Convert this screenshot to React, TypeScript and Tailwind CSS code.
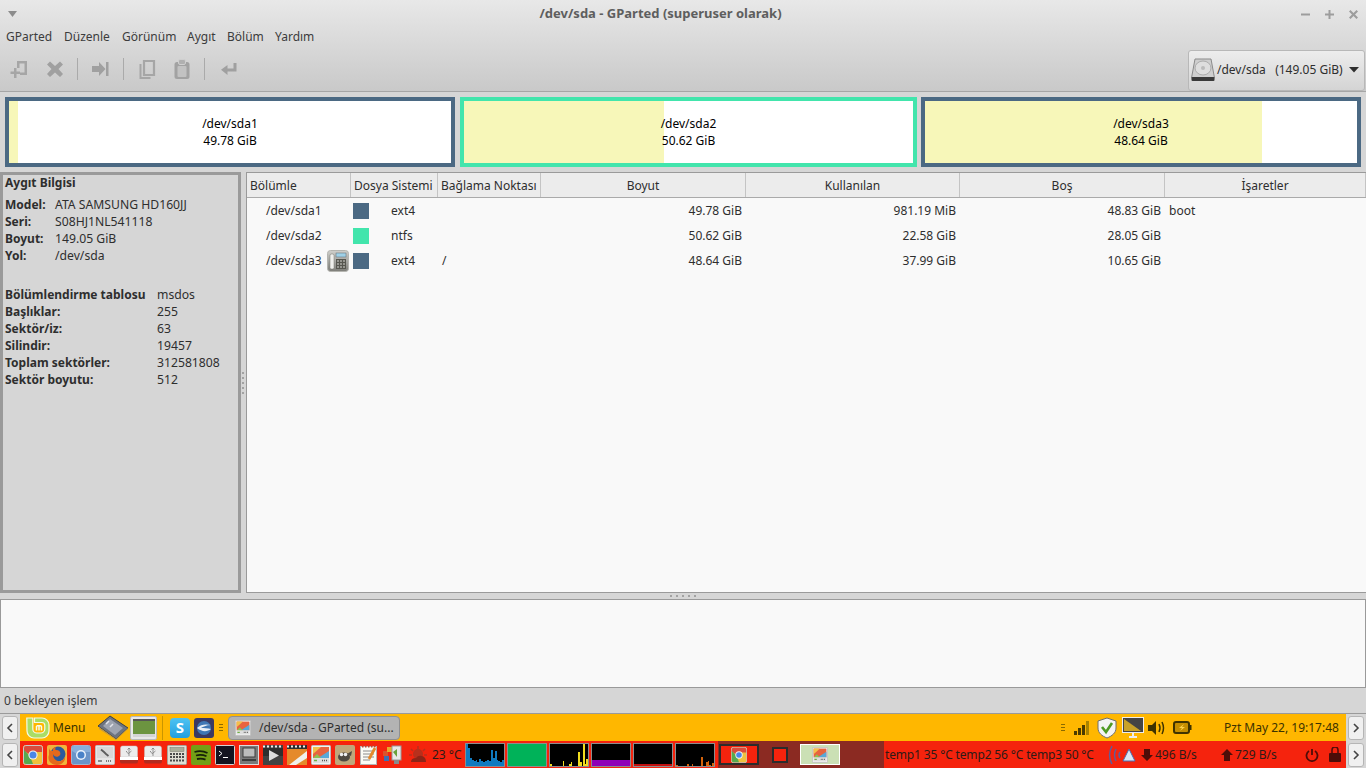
import type { ReactNode } from "react";

const deviceRows = [
  ["Model:", "ATA SAMSUNG HD160JJ"],
  ["Seri:", "S08HJ1NL541118"],
  ["Boyut:", "149.05 GiB"],
  ["Yol:", "/dev/sda"],
];

const tableRows = [
  ["Başlıklar:", "255"],
  ["Sektör/iz:", "63"],
  ["Silindir:", "19457"],
  ["Toplam sektörler:", "312581808"],
  ["Sektör boyutu:", "512"],
];

const menus = [
  ["GParted", "w-[58px]"],
  ["Düzenle", "w-[58px]"],
  ["Görünüm", "w-[65px]"],
  ["Aygıt", "w-[40px]"],
  ["Bölüm", "w-[48px]"],
  ["Yardım", "w-[48px]"],
];

const columns = [
  ["Bölümle", "w-[104px] justify-start pl-[3px]"],
  ["Dosya Sistemi", "w-[87px] justify-start pl-[3px]"],
  ["Bağlama Noktası", "w-[103px] justify-start pl-[3px]"],
  ["Boyut", "w-[205px] justify-center"],
  ["Kullanılan", "w-[214px] justify-center"],
  ["Boş", "w-[205px] justify-center"],
  ["İşaretler", "w-[201px] justify-center"],
];

const partitions = [
  { name: "/dev/sda1", color: "bg-[#4b6983]", fs: "ext4", mount: "", size: "49.78 GiB", used: "981.19 MiB", free: "48.83 GiB", flags: "boot", key: false },
  { name: "/dev/sda2", color: "bg-[#42e5ac]", fs: "ntfs", mount: "", size: "50.62 GiB", used: "22.58 GiB", free: "28.05 GiB", flags: "", key: false },
  { name: "/dev/sda3", color: "bg-[#4b6983]", fs: "ext4", mount: "/", size: "48.64 GiB", used: "37.99 GiB", free: "10.65 GiB", flags: "", key: true },
];

function Ico({ children, size = 20, className = "" }: { children: ReactNode; size?: number; className?: string }) {
  return (
    <svg width={size} height={size} viewBox="0 0 20 20" className={`shrink-0 ${className}`}>
      {children}
    </svg>
  );
}

function ToolSep() {
  return <div className="h-[22px] w-px bg-[#aaaaaa]" />;
}

function Toolbar() {
  return (
    <div className="flex h-[40px] items-center pl-[9px] pt-[8px]">
      <div className="mr-[16px]">
        <Ico>
          <path d="M8 2h10v14h-7v-2.500h4.500v-9h-5V9H8z" fill="#a6a6a6" />
          <path d="M5 9h2.500v3.500H11V15H7.500v4H5v-4H1.500v-2.500H5z" fill="#a6a6a6" />
        </Ico>
      </div>
      <div className="mr-[12px]">
        <Ico>
          <path d="M5 2.500l5 4.500 5-4.500 3 3L13.500 10l4.500 5-3 3-5-4.500L5 18l-3-3 4.500-5L2 5.500z" fill="#a0a0a0" />
        </Ico>
      </div>
      <ToolSep />
      <div className="ml-[13px] mr-[12px]">
        <Ico>
          <path d="M1 7h7V3l6.500 7L8 17v-4H1z" fill="#a0a0a0" />
          <rect x="15" y="3" width="2.500" height="14" fill="#a0a0a0" />
        </Ico>
      </div>
      <ToolSep />
      <div className="ml-[13px] mr-[15px]">
        <Ico>
          <path d="M7 2h10v14H7z" fill="none" stroke="#a6a6a6" strokeWidth="2.200" />
          <path d="M3.500 5v14h10" fill="none" stroke="#a6a6a6" strokeWidth="2" />
        </Ico>
      </div>
      <div className="mr-[12px]">
        <Ico>
          <rect x="2.500" y="3" width="15" height="17" rx="2.500" fill="#a2a2a2" />
          <rect x="6.500" y="0.500" width="7" height="5" rx="1.500" fill="#b0b0b0" stroke="#cfcfcf" />
          <rect x="5.500" y="7" width="9" height="11" rx="1" fill="#c2c2c2" />
        </Ico>
      </div>
      <ToolSep />
      <div className="ml-[14px]">
        <Ico>
          <path d="M14.500 4H17.500v8.500H8.500V16L2 10.800 8.500 6v3.500h6z" fill="#a0a0a0" />
        </Ico>
      </div>
    </div>
  );
}

function DiskIcon() {
  return (
    <svg width="24" height="24" viewBox="0 0 24 24" className="shrink-0">
      <path d="M4 1h16l3.500 19H.5z" fill="#cfcfcf" stroke="#8a8a8a" />
      <ellipse cx="12" cy="10" rx="8" ry="7" fill="#dedede" stroke="#ababab" />
      <circle cx="12" cy="10" r="2" fill="#bbbbbb" />
      <rect x="0.500" y="19" width="23" height="4" rx="1" fill="#3a3a3a" />
    </svg>
  );
}

function PartitionBox({ name, size, border, width, usedWidth }: { name: string; size: string; border: string; width: string; usedWidth: string }) {
  return (
    <div className={`relative h-[70px] border-[4px] bg-white ${border} ${width}`}>
      <div className={`absolute inset-y-0 left-0 bg-[#f7f7b9] ${usedWidth}`} />
      <div className="relative flex h-full flex-col items-center justify-center leading-[17px] text-black">
        <span>{name}</span>
        <span>{size}</span>
      </div>
    </div>
  );
}

function InfoPanel() {
  return (
    <div className="h-[421px] w-[241px] shrink-0 border-[3px] border-[#9a9a9a] bg-[#d6d6d6] pl-[2px] leading-[17px] text-[#2e2e2e]">
      <div className="mt-[-1px] font-bold">Aygıt Bilgisi</div>
      <div className="mt-[5px]">
        {deviceRows.map(([label, value]) => (
          <div key={label} className="flex">
            <span className="w-[50px] font-bold">{label}</span>
            <span className="text-[12.200px]">{value}</span>
          </div>
        ))}
      </div>
      <div className="mt-[22px]">
        <div className="flex">
          <span className="w-[152px] font-bold">Bölümlendirme tablosu</span>
          <span className="text-[12.200px]">msdos</span>
        </div>
        {tableRows.map(([label, value]) => (
          <div key={label} className="flex">
            <span className="w-[152px] font-bold">{label}</span>
            <span className="text-[12.200px]">{value}</span>
          </div>
        ))}
      </div>
    </div>
  );
}

function PhoneIcon() {
  return (
    <svg width="22" height="22" viewBox="0 0 22 22" className="absolute left-[80px] top-[2px]">
      <defs>
        <linearGradient id="ph" x1="0" y1="0" x2="0" y2="1">
          <stop offset="0" stopColor="#d0d0cc" />
          <stop offset="1" stopColor="#7d7d78" />
        </linearGradient>
      </defs>
      <rect x="0.500" y="0.500" width="21" height="21" rx="3" fill="url(#ph)" stroke="#b5b5b0" />
      <rect x="3" y="4" width="4" height="15" rx="1.500" fill="#efefec" stroke="#77776f" strokeWidth="0.500" />
      <rect x="9" y="3" width="10" height="4" fill="#9fd0e6" stroke="#5e6a70" strokeWidth="0.500" />
      <rect x="9" y="9" width="10" height="10" fill="#56564f" />
      <path d="M10 11h8M10 14h8M10 17h8" stroke="#d4d4d0" strokeWidth="1.200" strokeDasharray="2 1" />
    </svg>
  );
}

function PartitionTable() {
  return (
    <div className="h-[421px] flex-1 border border-[#9a9a9a] bg-[#f9f9f9] text-[#2e2e2e]">
      <div className="flex h-[25px] border-b border-[#aaaaaa] bg-[#ececec]">
        {columns.map(([label, cls]) => (
          <div key={label} className={`flex items-center whitespace-nowrap border-r border-[#c4c4c4] pt-[1px] ${cls}`}>
            {label}
          </div>
        ))}
      </div>
      {partitions.map((p) => (
        <div key={p.name} className="flex h-[25px] items-center">
          <div className="relative h-full w-[104px] pl-[19px] leading-[25px]">
            {p.name}
            {p.key && <PhoneIcon />}
          </div>
          <div className="flex w-[87px] items-center pl-[2px]">
            <div className={`h-[16px] w-[16px] ${p.color}`} />
            <span className="ml-[22px]">{p.fs}</span>
          </div>
          <div className="w-[103px] pl-[4px]">{p.mount}</div>
          <div className="w-[205px] pr-[4px] text-right">{p.size}</div>
          <div className="w-[214px] pr-[4px] text-right">{p.used}</div>
          <div className="w-[205px] pr-[4px] text-right">{p.free}</div>
          <div className="pl-[4px]">{p.flags}</div>
        </div>
      ))}
    </div>
  );
}

function Grip({ vertical }: { vertical?: boolean }) {
  return (
    <div className={`flex ${vertical ? "flex-col gap-[3px]" : "gap-[4px]"}`}>
      {[0, 1, 2, 3, 4].map((i) => (
        <div key={i} className="h-[2px] w-[2px] bg-[#a2a2a2]" />
      ))}
    </div>
  );
}

function ScrollBtn({ dir }: { dir: "l" | "r" }) {
  return (
    <div className="flex h-full w-[20px] shrink-0 items-center justify-center bg-[#d6d6d6]">
      <div className="flex h-[24px] w-[16px] items-center justify-center rounded-[3px] border border-[#b5b5b5] bg-[#f0f0f0]">
        <svg width="8" height="10" viewBox="0 0 8 10">
          <path d={dir === "l" ? "M6 1L2 5l4 4" : "M2 1l4 4-4 4"} fill="none" stroke="#444444" strokeWidth="1.600" />
        </svg>
      </div>
    </div>
  );
}

function MintLogo() {
  return (
    <svg width="24" height="22" viewBox="0 0 24 22" className="shrink-0">
      <path d="M.8 1h6v11a4 4 0 004 4h4a4 4 0 004-4V8.500a3 3 0 00-3-3H8.500V1H16a7 7 0 017 7v6a7 7 0 01-7 7H8a7 7 0 01-7-7z" fill="#a9dd66" stroke="#f4fbe6" strokeWidth="1.200" />
      <path d="M10.500 13.500V9M13 13.500V9.500M15.500 13.500V9.500M10.500 8.800h4a1 1 0 011 1" fill="none" stroke="#f7fcec" strokeWidth="1.500" />
    </svg>
  );
}

function ChromeIcon({ size = 20 }: { size?: number }) {
  return (
    <Ico size={size}>
      <rect x="0.500" y="0.500" width="19" height="19" rx="2" fill="#efc13c" stroke="#c9c9c9" />
      <path d="M1 3a2 2 0 012-2h14a2 2 0 012 2v4h-9a4 4 0 00-4 2L1 6z" fill="#d94b3d" />
      <path d="M1 5l6 6 3 8H3a2 2 0 01-2-2z" fill="#58a94f" />
      <circle cx="10" cy="10" r="4.600" fill="#f4f4f4" />
      <circle cx="10" cy="10" r="3.500" fill="#4a86e8" />
    </Ico>
  );
}

function GpartedIcon({ size = 20 }: { size?: number }) {
  return (
    <Ico size={size}>
      <rect x="0.500" y="0.500" width="19" height="19" rx="1" fill="#f2f2f2" stroke="#bdbdbd" />
      <rect x="2" y="2" width="16" height="11" fill="#e8633f" />
      <path d="M2 2h8L2 9z" fill="#f2c14a" />
      <path d="M18 6v7H7z" fill="#58a8d8" />
      <path d="M2 13l4-4 4 4z" fill="#8cc152" />
      <rect x="2" y="13" width="16" height="5" fill="#dedede" />
      <path d="M3 15.500h3" stroke="#6fb043" strokeWidth="1.500" />
      <path d="M11 15.500h6" stroke="#555555" strokeWidth="1.500" strokeDasharray="1 1" />
    </Ico>
  );
}

function TopPanelLeft() {
  return (
    <div className="flex h-full items-center">
      <ScrollBtn dir="l" />
      <div className="ml-[6px]">
        <MintLogo />
      </div>
      <span className="ml-[3px] w-[44px] text-[#3c3200]">Menu</span>
      <svg width="32" height="26" viewBox="0 0 32 26" className="shrink-0">
        <path d="M13 1L31 13 19 24 1 11z" fill="#6d7480" stroke="#3a3f48" />
        <path d="M13 4L26 13 18 20 6 11z" fill="#9ea4b0" />
        <path d="M9 9l3-3M13 12l3-3" stroke="#e2e4ea" strokeWidth="1.500" />
        <path d="M2 12v2l17 11 12-11v-1L19 24z" fill="#c59b3d" />
      </svg>
      <div className="ml-[1px] flex h-[24px] w-[27px] flex-col items-center justify-center rounded-[2px] border border-[#b9b9b9] bg-[#e8e8e8]">
        <div className="h-[15px] w-[22px] border-t-[2px] border-[#555555] bg-[#6c9440]" />
        <div className="h-[3px] w-[22px] bg-[#d4d4d4]" />
      </div>
      <div className="ml-[5px] mr-[7px] h-[24px] w-px bg-[#c99500]" />
      <div className="flex h-[20px] w-[20px] items-center justify-center rounded-[4px] bg-gradient-to-b from-[#4ec3f2] to-[#1f9fe0] text-[15px] font-bold leading-none text-white">
        S
      </div>
      <svg width="20" height="20" viewBox="0 0 20 20" className="ml-[4px] shrink-0">
        <rect width="20" height="20" rx="3" fill="#3b3a63" />
        <circle cx="10" cy="10" r="7" fill="#3f76b4" />
        <path d="M3 10c4-4 9-4 14-3-5 0-8 2-10 3 3 0 7 0 10 1-4 3-9 3-14-1z" fill="#e7edf5" />
      </svg>
      <div className="ml-[5px] mr-[5px] flex flex-col gap-[2px]">
        {[0, 1, 2].map((i) => (
          <div key={i} className="h-px w-[4px] bg-[#8a6a00]" />
        ))}
      </div>
      <div className="flex h-[24px] w-[172px] items-center whitespace-nowrap rounded-[4px] border-[1.500px] border-[#8f8f8f] bg-[#b3b3b3] pl-[6px] text-[#2e2e2e]">
        <GpartedIcon size={16} />
        <span className="ml-[8px]">/dev/sda - GParted (su...</span>
      </div>
    </div>
  );
}

function Clock() {
  return (
    <div className="flex h-full items-center">
      <div className="mr-[9px] flex flex-col gap-[2px]">
        {[0, 1, 2].map((i) => (
          <div key={i} className="h-px w-[4px] bg-[#8a6a00]" />
        ))}
      </div>
      <svg width="16" height="16" viewBox="0 0 16 16" className="mr-[3px] shrink-0">
        <path d="M0 11h3v4H0zM4 8h3v7H4zM8 5h3v10H8z" fill="#4a3b00" />
        <path d="M12 1h3v14h-3z" fill="#a98300" />
      </svg>
      <svg width="20" height="22" viewBox="0 0 20 22" className="ml-[4px] shrink-0">
        <path d="M10 1l9 3v7c0 5-4 8-9 10-5-2-9-5-9-10V4z" fill="#f4f4f4" stroke="#6f6f6f" />
        <path d="M5 10l4 5 6-9" fill="none" stroke="#4f9a25" strokeWidth="2.600" />
      </svg>
      <svg width="22" height="22" viewBox="0 0 22 22" className="ml-[5px] shrink-0">
        <rect x="0.500" y="0.500" width="21" height="15" fill="#444444" stroke="#ededed" />
        <path d="M2 2l17 12H2z" fill="#c9a227" />
        <path d="M7 20h8M11 15v5" stroke="#ededed" strokeWidth="2" />
      </svg>
      <svg width="18" height="16" viewBox="0 0 18 16" className="ml-[4px] shrink-0">
        <path d="M0 5h4l4-4v14l-4-4H0z" fill="#3f3300" />
        <path d="M11 4q2 4 0 8M14 2q3 6 0 12" fill="none" stroke="#3f3300" strokeWidth="1.500" />
      </svg>
      <svg width="19" height="13" viewBox="0 0 19 13" className="ml-[7px] shrink-0">
        <rect x="1" y="1" width="15" height="11" rx="2" fill="#3f3300" fillOpacity="0.300" stroke="#3f3300" strokeWidth="2" />
        <rect x="16.500" y="4" width="2" height="5" fill="#3f3300" />
        <path d="M11 3L6 7h3L7 10l5-4H9z" fill="#ffd24a" />
      </svg>
      <span className="ml-[32px] w-[122px] whitespace-nowrap text-[#3c3200]">Pzt May 22, 19:17:48</span>
      <ScrollBtn dir="r" />
    </div>
  );
}

function Bars({ bars, color }: { bars: number[]; color: string }) {
  return (
    <div className="flex h-[24px] w-[40px] shrink-0 items-end border border-[#8d8d8d] bg-black">
      {bars.map((h, i) => (
        <div key={i} className={`w-[2px] ${color}`} style={{ height: h }} />
      ))}
    </div>
  );
}

function UsbDrive() {
  return (
    <Ico>
      <path d="M1.500 12V3a2 2 0 012-2h13a2 2 0 012 2v9z" fill="#ececec" stroke="#c4c4c4" strokeWidth="0.500" />
      <rect x="1" y="12" width="18" height="3" fill="#ffffff" />
      <path d="M1 15h18v1.500a2 2 0 01-2 2H3a2 2 0 01-2-2z" fill="#b32b1f" />
      <path d="M10 3v8M8.500 4.500L10 3l1.500 1.500M10 9L7.500 7V6M10 8l2.500-2" stroke="#7d7d7d" strokeWidth="0.800" fill="none" />
    </Ico>
  );
}

const launchers: ReactNode[] = [
  <ChromeIcon key="chrome" />,
  <Ico key="firefox">
    <rect width="20" height="20" rx="2" fill="#f0b53c" />
    <circle cx="11" cy="9" r="7.500" fill="#2a5a9e" />
    <path d="M2 3c1 3 2 3 4 3-1-2 1-4 3-4-1 1-1 3 0 3 4 0 5 3 4 5-2 3-6 2-7-1 0 5 4 8 8 7 2-1 4-3 4-5 1 5-3 9-8 9-6 0-10-5-8-10z" fill="#e5691c" />
  </Ico>,
  <Ico key="chromium">
    <rect x="0.500" y="0.500" width="19" height="19" rx="2" fill="#6b94c8" stroke="#9fb4ce" />
    <path d="M1 3a2 2 0 012-2h14a2 2 0 012 2v4H10a4 4 0 00-4 2L1 6z" fill="#88aedb" />
    <circle cx="10" cy="10" r="5" fill="#eaf2fb" />
    <circle cx="10" cy="10" r="3.500" fill="#4a82c8" />
  </Ico>,
  <Ico key="tools">
    <rect x="0.500" y="0.500" width="19" height="19" rx="1" fill="#e6e6e6" stroke="#bdbdbd" />
    <rect x="2" y="2" width="16" height="11" fill="#d8d8d8" />
    <path d="M6 4.500l3 2.500 2 2 2.500 2" stroke="#5c5c5c" strokeWidth="1.800" />
    <path d="M3 16h4" stroke="#6a6a6a" strokeWidth="1.500" />
    <path d="M11 16h6" stroke="#555555" strokeWidth="1.500" strokeDasharray="1 1" />
  </Ico>,
  <UsbDrive key="usb1" />,
  <UsbDrive key="usb2" />,
  <Ico key="calc">
    <rect x="0.500" y="0.500" width="19" height="19" rx="1" fill="#e0dfd4" stroke="#a7a69c" />
    <rect x="3" y="2.500" width="14" height="4" fill="#a9ae9a" stroke="#77776d" strokeWidth="0.500" />
    <path d="M3 9h14M3 12h14M3 15.500h14" stroke="#4a4a4a" strokeWidth="2" strokeDasharray="2 1" />
  </Ico>,
  <Ico key="spotify">
    <rect width="20" height="20" rx="2" fill="#739f16" />
    <path d="M3.500 7q7-2 13 1M5 10.500q5.500-1.500 10.500.8M6 14q4.500-1 8.500.6" stroke="#16200a" strokeWidth="1.800" fill="none" />
  </Ico>,
  <Ico key="terminal">
    <rect x="0.500" y="0.500" width="19" height="19" rx="1" fill="#141420" stroke="#d4d4d4" />
    <path d="M4 6l3 2.500L4 11M8 12.500h5" stroke="#ffffff" fill="none" />
  </Ico>,
  <Ico key="screen">
    <rect x="0.500" y="0.500" width="19" height="19" fill="#7a7a7a" stroke="#dcdcdc" />
    <rect x="4" y="3" width="12" height="9" fill="#bcbcbc" stroke="#3e3e3e" />
    <rect x="3" y="14" width="14" height="2" fill="#3e3e3e" />
  </Ico>,
  <Ico key="video">
    <rect width="20" height="20" fill="#424242" />
    <path d="M0 1.500h20" stroke="#ededed" strokeWidth="2" strokeDasharray="2 2" />
    <rect y="3" width="20" height="8" fill="#2e2e2e" />
    <path d="M6 5l10 5.500L6 16z" fill="#dcdcdc" />
  </Ico>,
  <Ico key="clapper">
    <rect width="20" height="20" fill="#e58a2b" />
    <rect width="20" height="4" fill="#2f2f2f" />
    <path d="M0 1.500h20" stroke="#ededed" strokeWidth="2" strokeDasharray="2 2" />
    <path d="M20 6v7L9 20H2z" fill="#f0f0ec" />
  </Ico>,
  <GpartedIcon key="gparted" />,
  <Ico key="gimp">
    <rect width="20" height="20" rx="2" fill="#bfa77a" />
    <ellipse cx="9" cy="12" rx="6" ry="4.500" fill="#4f4a41" />
    <path d="M12 9l5-3-1 5z" fill="#4f4a41" />
    <circle cx="6.500" cy="9.500" r="1.800" fill="#f0f0f0" />
    <circle cx="10.500" cy="9.500" r="1.800" fill="#f0f0f0" />
  </Ico>,
  <Ico key="notes">
    <rect x="1.500" y="1.500" width="16" height="18" fill="#fbfbf4" stroke="#b4b4b4" />
    <path d="M3 1.500h14" stroke="#c9402c" strokeWidth="2" strokeDasharray="1.500 1.500" />
    <path d="M4 6h11M4 9h11M4 12h11M4 15h7" stroke="#8b8b8b" />
    <path d="M16 3l-6 11" stroke="#e38a2c" strokeWidth="2.800" />
  </Ico>,
  <Ico key="mixed">
    <rect x="0" y="6" width="5" height="5" fill="#d9532c" />
    <rect x="4" y="2" width="5" height="5" fill="#e7a92d" />
    <rect x="1" y="11" width="5" height="5" fill="#3f6fb0" />
    <rect x="9" y="1" width="9" height="14" fill="#e8e8e8" stroke="#9a9a9a" />
    <rect x="11" y="15" width="5" height="4" fill="#8a8a8a" />
    <path d="M10 7l4-3v8z" fill="#6aa13b" />
  </Ico>,
];

function BottomPanel() {
  return (
    <div className="flex h-[27px] items-center bg-[#f5230d] text-[#2e1b17]">
      <ScrollBtn dir="l" />
      <div className="ml-[3px] flex items-center gap-[4px]">{launchers}</div>
      <svg width="18" height="18" viewBox="0 0 18 18" className="ml-[6px] shrink-0">
        <circle cx="9" cy="8" r="5" fill="#b8301c" />
        <path d="M9 0v3M2 3l2 2M16 3l-2 2M0 9h3M18 9h-3" stroke="#b8301c" strokeWidth="1.500" />
        <path d="M2 16q0-4 5-4 2-3 6-2 4 1 4 6z" fill="#8e2517" />
      </svg>
      <span className="ml-[5px] w-[33px] whitespace-nowrap">23 °C</span>
      <div className="flex gap-[2px]">
        <Bars color="bg-[#0f7ac0]" bars={[22, 18, 8, 6, 5, 6, 4, 7, 5, 4, 5, 6, 5, 16, 8, 15, 6, 5, 4, 6]} />
        <div className="h-[24px] w-[40px] shrink-0 border border-[#8d8d8d] bg-[#00b259]" />
        <Bars color="bg-[#f0dc1e]" bars={[2, 0, 0, 0, 0, 0, 0, 0, 5, 0, 0, 0, 2, 4, 0, 0, 0, 0, 14, 4, 0, 22, 2, 7]} />
        <div className="flex h-[24px] w-[40px] shrink-0 items-end border border-[#8d8d8d] bg-black">
          <div className="h-[6px] w-full bg-[#8f00b8]" />
        </div>
        <div className="flex h-[24px] w-[40px] shrink-0 items-end border border-[#8d8d8d] bg-black">
          <div className="h-[2px] w-full bg-[#c01010]" />
        </div>
        <Bars color="bg-[#d4620a]" bars={[1, 0, 0, 0, 0, 0, 0, 2, 0, 0, 2, 0, 0, 0, 0, 0, 9, 0, 0, 4, 5, 1, 0, 3]} />
      </div>
      <div className="ml-[3px] flex h-[27px] w-[166px] shrink-0 items-center bg-[#8b2a22] pl-[1px]">
        <div className="flex h-[21px] w-[40px] items-center justify-center border-[2px] border-[#2b2b2b] bg-[#f5230d]">
          <ChromeIcon size={16} />
        </div>
        <div className="ml-[13px] h-[16px] w-[16px] border-[2px] border-[#2b2b2b] bg-[#f5230d]" />
        <div className="ml-[12px] flex h-[21px] w-[40px] items-center justify-center border border-white bg-[#cbe0b5]">
          <GpartedIcon size={16} />
        </div>
      </div>
      <span className="ml-[1px] w-[222px] whitespace-nowrap tracking-[-0.150px]">temp1 35 °C temp2 56 °C temp3 50 °C</span>
      <svg width="15" height="22" viewBox="0 0 15 22" className="shrink-0">
        <path d="M5 2Q0 11 5 20M9 5q-3 6 0 12M13 8q-2 3 0 6" fill="none" stroke="#5e5e9a" strokeWidth="1.500" />
      </svg>
      <svg width="14" height="14" viewBox="0 0 14 14" className="shrink-0">
        <path d="M7 1l6 12H1z" fill="#dbe6f5" stroke="#4a6fb0" />
      </svg>
      <svg width="14" height="14" viewBox="0 0 14 14" className="ml-[4px] shrink-0">
        <path d="M4 1h6v6h3l-6 6-6-6h3z" fill="#4e0d08" />
      </svg>
      <span className="ml-[1px] w-[65px] whitespace-nowrap">496 B/s</span>
      <svg width="14" height="14" viewBox="0 0 14 14" className="shrink-0">
        <path d="M4 13h6V7h3L7 1 1 7h3z" fill="#4e0d08" />
      </svg>
      <span className="ml-[1px] w-[70px] whitespace-nowrap">729 B/s</span>
      <svg width="14" height="14" viewBox="0 0 14 14" className="shrink-0">
        <path d="M4 3a5.500 5.500 0 106 0M7 1v6" fill="none" stroke="#4e0d08" strokeWidth="1.800" />
      </svg>
      <svg width="12" height="15" viewBox="0 0 12 15" className="ml-[10px] shrink-0">
        <path d="M3 6V3a3 3 0 016 0v3" fill="none" stroke="#4e0d08" strokeWidth="1.500" />
        <rect x="0" y="6" width="12" height="9" rx="1" fill="#4e0d08" />
      </svg>
      <div className="ml-auto h-full">
        <ScrollBtn dir="r" />
      </div>
    </div>
  );
}

export default function App() {
  return (
    <div
      className="flex h-[768px] w-[1366px] flex-col overflow-hidden bg-[#d6d6d6] text-[12px] text-[#2e2e2e]"
      style={{ fontFamily: '"Noto Sans", sans-serif' }}
    >
      <div className="relative h-[92px] shrink-0 border-b border-[#a6a6a6] bg-gradient-to-b from-[#e8e8e8] to-[#c9c9c9]">
        <div className="flex h-[28px] items-center justify-between pl-[8px] pr-[8px]">
          <svg width="10" height="6" viewBox="0 0 10 6">
            <path d="M0 0h9L4.500 6z" fill="#8c8c8c" />
          </svg>
          <span className="ml-[2px] text-[13px] font-bold text-[#5e5e5e]">/dev/sda - GParted (superuser olarak)</span>
          <div className="flex items-center gap-[15px]">
            <svg width="9" height="9" viewBox="0 0 9 9"><rect y="3.500" width="9" height="2" fill="#9d9d9d" /></svg>
            <svg width="9" height="9" viewBox="0 0 9 9"><path d="M3.500 0h2v3.500H9v2H5.500V9h-2V5.500H0v-2h3.500z" fill="#9d9d9d" /></svg>
            <svg width="9" height="9" viewBox="0 0 9 9"><path d="M1.500 0L4.500 3l3-3L9 1.500l-3 3 3 3L7.500 9l-3-3-3 3L0 7.500l3-3-3-3z" fill="#9d9d9d" /></svg>
          </div>
        </div>
        <div className="flex h-[17px] items-center pl-[6px] text-[#3c3c3c]">
          {menus.map(([label, cls]) => (
            <span key={label} className={cls}>{label}</span>
          ))}
        </div>
        <Toolbar />
        <div className="absolute right-[1px] top-[50px] z-10 flex h-[41px] w-[177px] items-center rounded-[3px] border border-[#b8b8b8] bg-gradient-to-b from-[#ededed] to-[#d4d4d4] pb-[1px] pl-[2px]">
          <DiskIcon />
          <span className="ml-[2px] whitespace-pre">/dev/sda   (149.05 GiB)</span>
          <svg width="10" height="6" viewBox="0 0 10 6" className="ml-[6px]">
            <path d="M0 0h10L5 5.500z" fill="#2e2e2e" />
          </svg>
        </div>
      </div>

      <div className="flex h-[80px] shrink-0 items-start gap-[5px] pl-[5px] pt-[5px]">
        <PartitionBox name="/dev/sda1" size="49.78 GiB" border="border-[#4b6983]" width="w-[450px]" usedWidth="w-[9px]" />
        <PartitionBox name="/dev/sda2" size="50.62 GiB" border="border-[#42e5ac]" width="w-[457px]" usedWidth="w-[200px]" />
        <PartitionBox name="/dev/sda3" size="48.64 GiB" border="border-[#4b6983]" width="w-[440px] ml-[-1px]" usedWidth="w-[337px]" />
      </div>

      <div className="flex h-[421px] shrink-0">
        <InfoPanel />
        <div className="flex w-[5px] shrink-0 items-center pl-[1px]">
          <Grip vertical />
        </div>
        <PartitionTable />
      </div>

      <div className="flex h-[6px] shrink-0 items-center justify-center">
        <Grip />
      </div>

      <div className="h-[89px] shrink-0 border border-[#9a9a9a] bg-[#f9f9f9]" />
      <div className="flex h-[25px] shrink-0 items-center pl-[4px] pt-[1px] text-[#3c3c3c]">0 bekleyen işlem</div>

      <div className="flex h-[28px] shrink-0 items-center justify-between border-t border-[#9a9a9a] bg-[#ffb700]">
        <TopPanelLeft />
        <Clock />
      </div>
      <BottomPanel />
    </div>
  );
}
